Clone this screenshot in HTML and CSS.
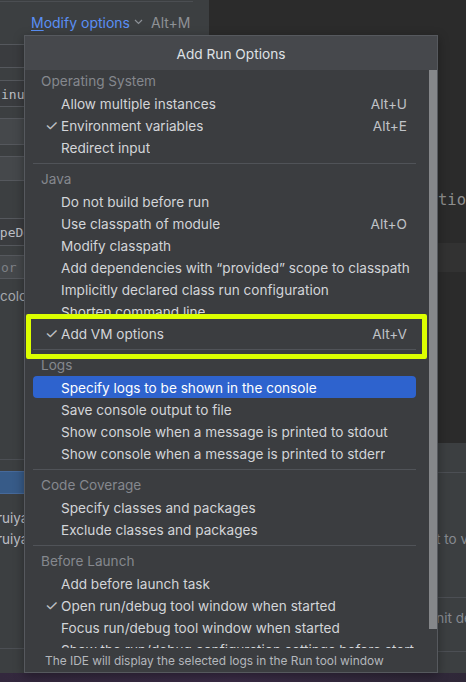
FILE: index.html
```html
<!DOCTYPE html>
<html>
<head>
<meta charset="utf-8">
<link rel="stylesheet" href="styles.css">
</head>
<body>
<div class="screen">
  <div class="scene">
    <div class="dialog">
      <div class="topline"></div>
      <div class="opts-row">
        <span class="link"><span class="mn">M</span>odify options</span>
        <svg class="chev" width="9" height="6" viewBox="0 0 9 6"><path d="M1 1 L4.5 4.5 L8 1" fill="none" stroke="#8c9096" stroke-width="1.2"/></svg>
        <span class="kbd">Alt+M</span>
      </div>
      <div class="field f1"></div>
      <div class="field f2"><span class="mono">inux</span></div>
      <div class="field f3 light"></div>
      <div class="field f4 light"></div>
      <div class="field f5"><span class="mono shift">ypeDef</span></div>
      <div class="field f6 light"><span class="mono ph">or</span></div>
      <div class="plain colo">color</div>
      <div class="hline l1"></div>
      <div class="btn"></div>
      <div class="plain ruiya r1">ruiyang</div>
      <div class="plain ruiya r2">ruiyang</div>
      <div class="hline l2"></div>
    </div>
    <div class="side">
      <div class="side-dark">
        <div class="code-line">tions</div>
        <div class="band"></div>
      </div>
      <div class="side-lower">
        <div class="hline s1"></div>
        <div class="hint h1">t to view</div>
        <div class="hline s2"></div>
        <div class="hint h2">init defaults</div>
        <div class="hline s3"></div>
      </div>
    </div>
  </div>
  <div class="desk"></div>

  <div class="popup">
    <div class="popup-head">Add Run Options</div>
    <div class="popup-body">
      <div class="list">
        <div class="sect">Operating System</div>
        <div class="item"><span class="chk"></span><span class="lbl">Allow multiple instances</span><span class="sc">Alt+U</span></div>
        <div class="item"><span class="chk">✓</span><span class="lbl">Environment variables</span><span class="sc">Alt+E</span></div>
        <div class="item"><span class="chk"></span><span class="lbl">Redirect input</span></div>
        <div class="sep"></div>
        <div class="sect">Java</div>
        <div class="item"><span class="chk"></span><span class="lbl">Do not build before run</span></div>
        <div class="item"><span class="chk"></span><span class="lbl">Use classpath of module</span><span class="sc">Alt+O</span></div>
        <div class="item"><span class="chk"></span><span class="lbl">Modify classpath</span></div>
        <div class="item"><span class="chk"></span><span class="lbl">Add dependencies with “provided” scope to classpath</span></div>
        <div class="item"><span class="chk"></span><span class="lbl">Implicitly declared class run configuration</span></div>
        <div class="item"><span class="chk"></span><span class="lbl">Shorten command line</span></div>
        <div class="item"><span class="chk">✓</span><span class="lbl">Add VM options</span><span class="sc">Alt+V</span></div>
        <div class="sep"></div>
        <div class="sect">Logs</div>
        <div class="item sel"><span class="chk"></span><span class="lbl">Specify logs to be shown in the console</span></div>
        <div class="item"><span class="chk"></span><span class="lbl">Save console output to file</span></div>
        <div class="item"><span class="chk"></span><span class="lbl">Show console when a message is printed to stdout</span></div>
        <div class="item"><span class="chk"></span><span class="lbl">Show console when a message is printed to stderr</span></div>
        <div class="sep"></div>
        <div class="sect">Code Coverage</div>
        <div class="item"><span class="chk"></span><span class="lbl">Specify classes and packages</span></div>
        <div class="item"><span class="chk"></span><span class="lbl">Exclude classes and packages</span></div>
        <div class="sep"></div>
        <div class="sect">Before Launch</div>
        <div class="item"><span class="chk"></span><span class="lbl">Add before launch task</span></div>
        <div class="item"><span class="chk">✓</span><span class="lbl">Open run/debug tool window when started</span></div>
        <div class="item"><span class="chk"></span><span class="lbl">Focus run/debug tool window when started</span></div>
        <div class="item"><span class="chk"></span><span class="lbl">Show the run/debug configuration settings before start</span></div>
      </div>
      <div class="scroll"><div class="thumb"></div></div>
    </div>
    <div class="popup-foot">The IDE will display the selected logs in the Run tool window</div>
  </div>
  <div class="callout"></div>
</div>
</body>
</html>
```

FILE: styles.css
```css
* { box-sizing: border-box; }
html, body { margin: 0; padding: 0; }
body {
  width: 466px;
  height: 682px;
  overflow: hidden;
  background: #2b2b2b;
  font-family: Inter, "Noto Sans", sans-serif;
}
.screen {
  position: relative;
  width: 466px;
  height: 682px;
  overflow: hidden;
  display: flex;
  flex-direction: column;
}
.scene {
  display: flex;
  height: 673px;
}
.desk {
  height: 9px;
  background: linear-gradient(90deg, #33283d, #3a2c46 50%, #2f2838);
}

/* left dialog */
.dialog {
  width: 209px;
  background: #3c3f41;
  display: flex;
  flex-direction: column;
  overflow: hidden;
}
.topline {
  height: 1px;
  width: 193px;
  margin-top: 1px;
  background: #4b4e52;
}
.opts-row {
  height: 40px;
  display: flex;
  align-items: center;
  padding-left: 31px;
  font-size: 14px;
}
.link { color: #5a8ff5; }
.mn { text-decoration: underline; text-underline-offset: 2px; }
.chev { margin-left: 4px; margin-right: 8px; }
.kbd { color: #8e9196; }

.field {
  margin-left: -6px;
  width: 190px;
  border: 1px solid #55585d;
  border-radius: 3px;
  background: #3a3c3f;
  display: flex;
  align-items: center;
  padding-left: 6px;
  overflow: hidden;
  white-space: nowrap;
}
.field.light { background: #45484b; }
.f1 { margin-top: 2px; height: 24px; }
.f2 { margin-top: 12px; height: 27px; padding-top: 2px; }
.f3 { margin-top: 11px; height: 27px; }
.f4 { margin-top: 11px; height: 25px; }
.f5 { margin-top: 37px; height: 28px; }
.f6 { margin-top: 9px; height: 24px; }
.mono {
  font-family: "DejaVu Sans Mono", "Liberation Mono", monospace;
  font-size: 13px;
  color: #bcbec4;
}
.mono.shift { margin-left: -9px; }
.mono.ph { color: #7d8086; }
.plain {
  height: 18px;
  line-height: 18px;
  font-size: 13.5px;
  color: #bcbec4;
  white-space: nowrap;
}
.colo {
  margin-top: 8px;
  color: #a6a9ae;
}
.hline { height: 1px; background: #4c4f54; flex: none; }
.l1 { margin-top: 154px; }
.btn {
  margin-top: 11px;
  height: 23px;
  margin-left: -6px;
  width: 120px;
  background: #375b88;
  border: 1px solid #46699a;
  border-radius: 4px;
}
.ruiya { margin-left: -3px; }
.r1 { margin-top: 15px; }
.r2 { margin-top: 3px; }
.l2 { margin-top: 100px; }

/* right side */
.side {
  flex: 1;
  display: flex;
  flex-direction: column;
  background: #2b2b2b;
  overflow: hidden;
}
.side-dark {
  height: 443px;
  display: flex;
  flex-direction: column;
}
.code-line {
  margin-top: 190px;
  height: 20px;
  line-height: 20px;
  padding-left: 229px;
  font-family: "DejaVu Sans Mono", "Liberation Mono", monospace;
  font-size: 15.5px;
  color: #8e8e8e;
  white-space: nowrap;
}
.band {
  margin-top: 33px;
  height: 29px;
  background: #323232;
}
.side-lower {
  flex: 1;
  background: #3c3f41;
  display: flex;
  flex-direction: column;
}
.s1 { margin-top: 29px; }
.hint {
  height: 18px;
  line-height: 18px;
  font-size: 13.5px;
  color: #868a90;
  white-space: nowrap;
}
.h1 { margin-top: 57px; padding-left: 227px; }
.s2 { margin-top: 49px; }
.h2 { margin-top: 11px; padding-left: 224px; }
.s3 { margin-top: 24px; }

/* popup */
.popup {
  position: absolute;
  left: 24px;
  top: 35px;
  width: 414px;
  height: 638px;
  border: 1px solid #56595e;
  background: #3b3d40;
  display: flex;
  flex-direction: column;
  box-shadow: 0 3px 10px rgba(0,0,0,0.35);
}
.popup-head {
  height: 34px;
  flex: none;
  background: #46484c;
  color: #dfe1e5;
  font-size: 13.7px;
  display: flex;
  align-items: center;
  justify-content: center;
  padding-top: 1px;
}
.popup-body {
  height: 578px;
  flex: none;
  display: flex;
  overflow: hidden;
}
.list {
  width: 404px;
  padding: 0 13px 0 8px;
  display: flex;
  flex-direction: column;
  overflow: hidden;
}
.sect {
  flex: none;
  height: 22px;
  line-height: 22px;
  padding-left: 8px;
  font-size: 13.6px;
  color: #85888e;
}
.item {
  flex: none;
  height: 22px;
  display: flex;
  align-items: center;
  padding: 2px 0 0 12px;
  font-size: 13.6px;
  color: #d3d5d9;
  white-space: nowrap;
  overflow: hidden;
}
.item.sel {
  background: #2e63ce;
  border-radius: 4px;
  color: #ffffff;
}
.chk {
  width: 16px;
  flex: none;
  color: #bfc1c5;
  font-size: 15px;
  margin-top: -1px;
}
.lbl { overflow: hidden; }
.sc {
  margin-left: auto;
  padding-left: 12px;
  padding-right: 9px;
  color: #c0c3c8;
}
.sep {
  flex: none;
  height: 1px;
  margin: 5px 0 4px;
  background: #505358;
}
.scroll {
  width: 8px;
  flex: none;
}
.thumb {
  height: 559px;
  background: #85878a;
}
.popup-foot {
  flex: 1;
  display: flex;
  align-items: center;
  padding-left: 20px;
  padding-top: 1px;
  font-size: 11.9px;
  color: #b4b7bc;
  white-space: nowrap;
}

/* annotation */
.callout {
  position: absolute;
  left: 26px;
  top: 314px;
  width: 401px;
  height: 45px;
  border: 5px solid #dcff00;
  border-radius: 2px;
}
```
